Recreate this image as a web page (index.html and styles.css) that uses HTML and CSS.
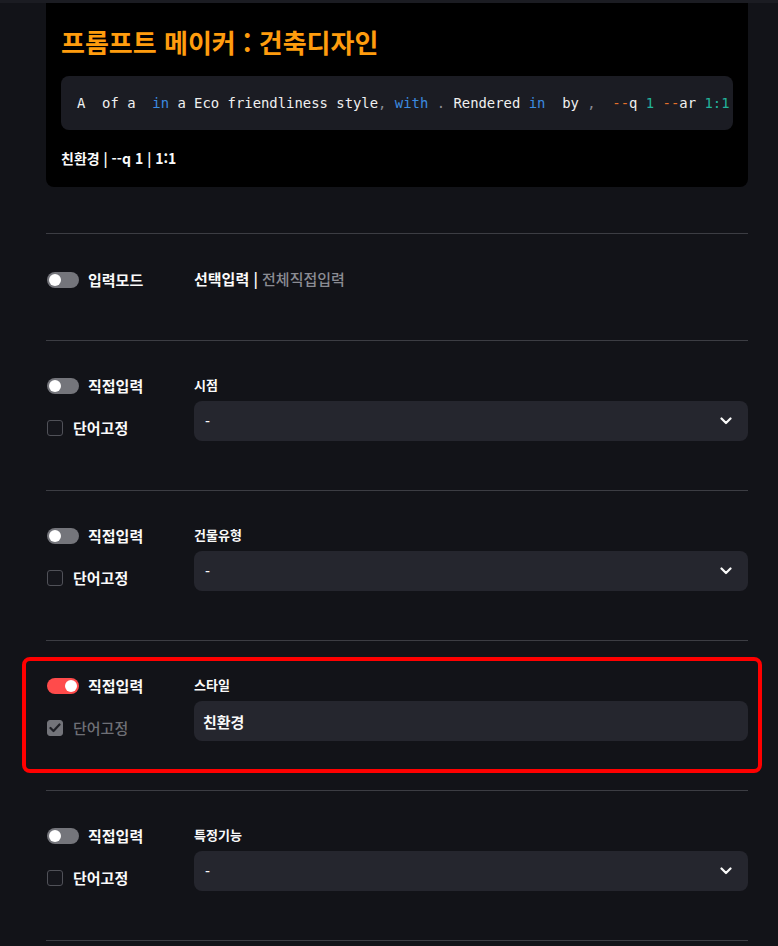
FILE: index.html
```html
<!DOCTYPE html>
<html lang="ko">
<head>
<meta charset="utf-8">
<link rel="stylesheet" href="styles.css">
</head>
<body>
<div class="topbar"></div>
<main class="page">
  <section class="card">
    <h1 class="title">프롬프트 메이커 : 건축디자인</h1>
    <pre class="code"><span>A  of a  </span><span class="kw">in</span><span> a Eco friendliness style</span><span class="pn">,</span><span> </span><span class="kw">with</span><span> </span><span class="pn">.</span><span> Rendered </span><span class="kw">in</span><span>  by </span><span class="pn">,</span><span>  </span><span class="op">--</span><span>q </span><span class="nm">1</span><span> </span><span class="op">--</span><span>ar </span><span class="nm">1:1</span></pre>
    <p class="summary">친환경 | --q 1 | 1:1</p>
  </section>

  <hr class="divider first">

  <div class="row mode-row">
    <div class="left">
      <div class="opt"><span class="toggle"></span><span class="opt-text">입력모드</span></div>
    </div>
    <div class="right">
      <div class="mode"><b>선택입력</b> | <span class="muted">전체직접입력</span></div>
    </div>
  </div>

  <hr class="divider">

  <div class="row">
    <div class="left">
      <div class="opt"><span class="toggle"></span><span class="opt-text">직접입력</span></div>
      <div class="opt check-opt"><span class="check"></span><span class="opt-text">단어고정</span></div>
    </div>
    <div class="right">
      <div class="label">시점</div>
      <div class="select"><span>-</span><svg class="chev" width="12" height="8" viewBox="0 0 12 8"><path d="M1.5 1.5 L6 6 L10.5 1.5" fill="none" stroke="#fafafa" stroke-width="2.2" stroke-linecap="round" stroke-linejoin="round"/></svg></div>
    </div>
  </div>

  <hr class="divider">

  <div class="row">
    <div class="left">
      <div class="opt"><span class="toggle"></span><span class="opt-text">직접입력</span></div>
      <div class="opt check-opt"><span class="check"></span><span class="opt-text">단어고정</span></div>
    </div>
    <div class="right">
      <div class="label">건물유형</div>
      <div class="select"><span>-</span><svg class="chev" width="12" height="8" viewBox="0 0 12 8"><path d="M1.5 1.5 L6 6 L10.5 1.5" fill="none" stroke="#fafafa" stroke-width="2.2" stroke-linecap="round" stroke-linejoin="round"/></svg></div>
    </div>
  </div>

  <hr class="divider">

  <div class="row highlighted">
    <div class="left">
      <div class="opt"><span class="toggle on"></span><span class="opt-text">직접입력</span></div>
      <div class="opt check-opt disabled"><span class="check checked"><svg width="12" height="10" viewBox="0 0 12 10"><path d="M1.5 5 L4.5 8 L10.5 1.5" fill="none" stroke="#1f2026" stroke-width="2.2" stroke-linecap="round" stroke-linejoin="round"/></svg></span><span class="opt-text">단어고정</span></div>
    </div>
    <div class="right">
      <div class="label">스타일</div>
      <div class="select input"><span>친환경</span></div>
    </div>
    <div class="redbox"></div>
  </div>

  <hr class="divider">

  <div class="row">
    <div class="left">
      <div class="opt"><span class="toggle"></span><span class="opt-text">직접입력</span></div>
      <div class="opt check-opt"><span class="check"></span><span class="opt-text">단어고정</span></div>
    </div>
    <div class="right">
      <div class="label">특정기능</div>
      <div class="select"><span>-</span><svg class="chev" width="12" height="8" viewBox="0 0 12 8"><path d="M1.5 1.5 L6 6 L10.5 1.5" fill="none" stroke="#fafafa" stroke-width="2.2" stroke-linecap="round" stroke-linejoin="round"/></svg></div>
    </div>
  </div>

  <hr class="divider">
</main>
</body>
</html>
```

FILE: styles.css
```css
* { box-sizing: border-box; }

html, body {
  margin: 0;
  padding: 0;
  background: #121318;
  color: #fafafa;
  font-family: "Noto Sans CJK KR", "Noto Sans", sans-serif;
  overflow: hidden;
}

.topbar {
  height: 3px;
  background: #1b1c22;
}

.page {
  margin: 0 30px 0 46px;
}

.card {
  background: #000;
  border-radius: 0 0 8px 8px;
  padding: 24px 15px 19px;
}

.title {
  margin: 0;
  font-size: 26px;
  line-height: 30px;
  font-weight: 700;
  color: #ff9c0e;
}

.code {
  margin: 19px 0 0;
  background: #1b1c23;
  border-radius: 8px;
  padding: 18px 0 18px 16px;
  font-family: "DejaVu Sans Mono", "Liberation Mono", monospace;
  font-size: 13.9px;
  line-height: 18px;
  color: #f0f0f0;
  white-space: pre;
}

.code .kw { color: #3b8be0; }
.code .pn { color: #8b8d94; }
.code .op { color: #e5712b; }
.code .nm { color: #22b39b; }

.summary {
  margin: 18px 0 0;
  font-size: 14px;
  line-height: 20px;
  font-weight: 600;
}

.divider {
  margin: 0;
  border: 0;
  height: 1px;
  background: #3c3d43;
}

.divider.first {
  margin-top: 46px;
}

.row {
  position: relative;
  display: grid;
  grid-template-columns: 148px 1fr;
  padding: 34px 0 49px;
}

.mode-row {
  padding: 35px 0 50px;
}

.left {
  display: flex;
  flex-direction: column;
  gap: 22px;
  padding-top: 1px;
}

.opt {
  display: flex;
  align-items: center;
  height: 20px;
  gap: 9px;
  padding-left: 1px;
}

.opt-text {
  font-size: 15px;
  line-height: 20px;
  font-weight: 600;
  color: #fafafa;
}

.check-opt {
  gap: 10px;
}

.disabled .opt-text {
  color: #6e6f75;
  font-weight: 500;
}

.toggle {
  position: relative;
  width: 32px;
  height: 16px;
  border-radius: 8px;
  background: #74757b;
  flex: none;
}

.toggle::after {
  content: "";
  position: absolute;
  top: 2px;
  left: 2px;
  width: 12px;
  height: 12px;
  border-radius: 50%;
  background: #fff;
}

.toggle.on {
  background: #ff4b4b;
}

.toggle.on::after {
  left: 18px;
}

.check {
  width: 16px;
  height: 16px;
  border: 1px solid #505158;
  border-radius: 3px;
  background: #15161c;
  flex: none;
  display: flex;
  align-items: center;
  justify-content: center;
}

.check.checked {
  background: #73747a;
  border-color: #73747a;
}

.right {
  display: flex;
  flex-direction: column;
  gap: 6px;
}

.mode {
  font-size: 15px;
  line-height: 20px;
  color: #fafafa;
  font-weight: 600;
}

.mode b { font-weight: 700; }

.muted {
  color: #8b8c93;
  font-weight: 500;
}

.label {
  font-size: 13px;
  line-height: 20px;
  font-weight: 600;
  color: #fafafa;
}

.select {
  height: 40px;
  border-radius: 8px;
  background: #25262e;
  display: flex;
  align-items: center;
  justify-content: space-between;
  padding: 0 16px 0 11px;
  font-size: 14px;
  font-weight: 500;
}

.select.input {
  padding-left: 9px;
}

.select.input span {
  font-size: 15px;
  font-weight: 700;
}

.chev {
  display: block;
}

.redbox {
  position: absolute;
  top: 16px;
  bottom: 17px;
  left: -24px;
  right: -14px;
  border: 4px solid #ff0000;
  border-radius: 8px;
  pointer-events: none;
}
```
